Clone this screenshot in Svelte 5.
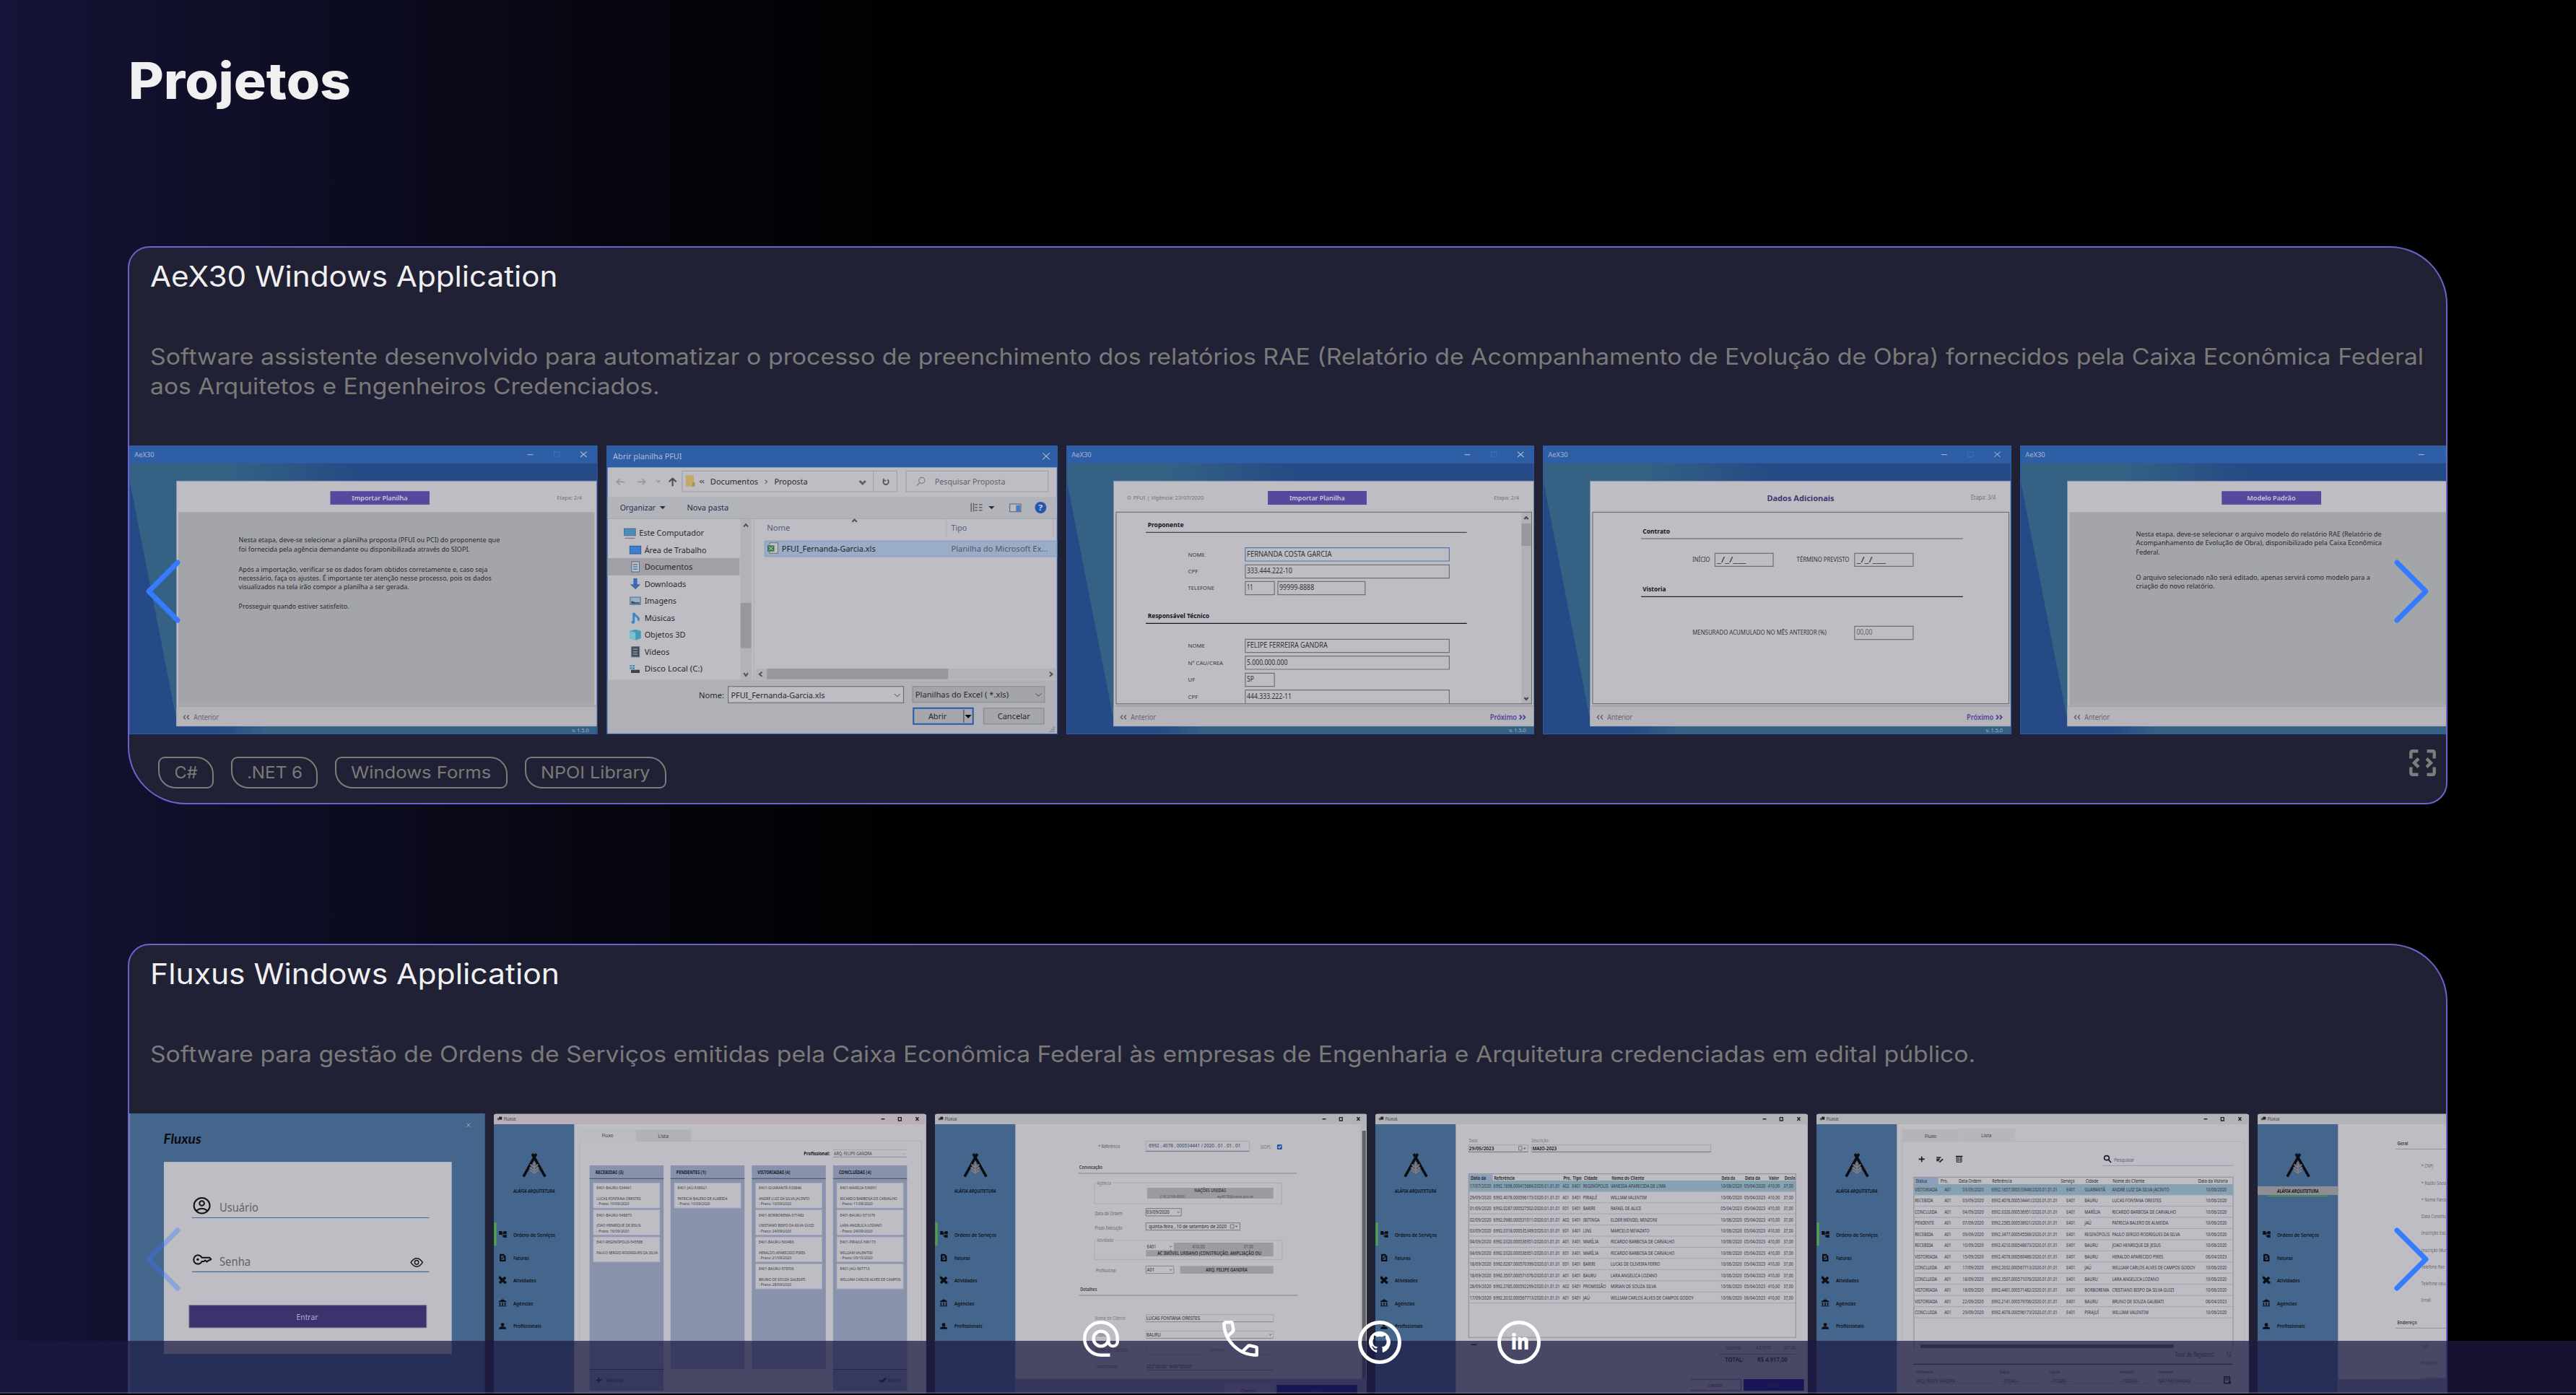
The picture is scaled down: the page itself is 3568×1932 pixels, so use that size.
<script>
  const menu = [
    ['Ordens de Serviços', 540, 145],
    ['Faturas', 636, 54],
    ['Atividades', 729, 79],
    ['Agências', 825, 68],
    ['Profissionais', 920, 96]
  ];

  const tree = [
    ['Área de Trabalho', 485, 207, '#3f7fd0'],
    ['Documentos', 555, 161, '#8f9aa8'],
    ['Downloads', 626, 139, '#3a6bb0'],
    ['Imagens', 697, 107, '#6f8fae'],
    ['Músicas', 767, 102, '#3f86cc'],
    ['Objetos 3D', 837, 137, '#3f9db5'],
    ['Vídeos', 908, 84, '#444a66'],
    ['Disco Local (C:)', 978, 194, '#55606c']
  ];

  const fields = [
    ['NOME', 503, 54, 'FERNANDA COSTA GARCIA', 271, 652],
    ['CPF', 574, 32, '333.444.222-10', 145, 652],
    ['TELEFONE', 643, 84, '11', 20, 93],
    ['NOME', 883, 54, 'FELIPE FERREIRA GANDRA', 258, 652],
    ['Nº CAU/CREA', 953, 112, '5.000.000.000', 130, 652],
    ['UF', 1024, 22, 'SP', 23, 93],
    ['CPF', 1094, 32, '444.333.222-11', 143, 652]
  ];

  const board = [
    { x: 363, name: 'RECEBIDAS (3)', w: 97, cards: [
      ['E401-BAURU-534441', 120, 'LUCAS FONTANA ORESTES', 152, '- Prazo: 10/09/2020', 112],
      ['E401-BAURU-548873', 121, 'JOAO HENRIQUE DE JESUS', 152, '- Prazo: 16/09/2020', 112],
      ['E401-REGINÓPOLIS-545588', 159, 'PAULO SERGIO RODRIGUES DA SILVA', 211, '', 0]
    ] },
    { x: 642, name: 'PENDENTES (1)', w: 102, cards: [
      ['E401-JAÚ-538921', 102, 'PATRICIA BALERO DE ALMEIDA', 172, '- Prazo: 13/09/2020', 112]
    ] },
    { x: 922, name: 'VISTORIADAS (4)', w: 112, cards: [
      ['E401-GUARANTÃ-533846', 147, 'ANDRE LUIZ DA SILVA JACINTO', 175, '- Prazo: 10/09/2020', 112],
      ['E401-BORBOREMA-571482', 156, 'CRISTIANO BISPO DA SILVA GUIZI', 190, '- Prazo: 24/09/2020', 112],
      ['E401-BAURU-560486', 121, 'HERALDO APARECIDO PIRES', 160, '- Prazo: 21/09/2020', 112],
      ['E401-BAURU-579706', 121, 'BRUNO DE SOUZA GALBIATI', 160, '- Prazo: 28/09/2020', 112]
    ] },
    { x: 1202, name: 'CONCLUÍDAS (4)', w: 111, cards: [
      ['E401-MARÍLIA-536951', 127, 'RICARDO BARBOSA DE CARVALHO', 197, '- Prazo: 11/09/2020', 112],
      ['E401-BAURU-571076', 121, 'LARA ANGELICA LOZANO', 144, '- Prazo: 24/09/2020', 112],
      ['E401-PIRAJUÍ-596173', 123, 'WILLIAM VALENTIM', 112, '- Prazo: 05/10/2020', 112],
      ['E401-JAÚ-567713', 102, 'WILLIAM CARLOS ALVES DE CAMPOS', 209, '', 0]
    ] }
  ];

  const invoice = [
    ['17/07/2020', '6992.1896.000415684/2020.01.01.01', 'A02', 'REGINÓPOLIS', 87, 'VANESSA APARECIDA DE LIMA', 190, '10/06/2020', '05/04/2020'],
    ['29/09/2020', '6992.4078.000596173/2020.01.01.01', 'A01', 'PIRAJUÍ', 48, 'WILLIAM VALENTIM', 124, '10/06/2020', '05/04/2023'],
    ['01/09/2020', '6992.0287.000527502/2020.01.01.01', 'E01', 'BARIRI', 42, 'RAFAEL DE ALICE', 105, '05/04/2023', '05/04/2023'],
    ['02/09/2020', '6992.0980.000531011/2020.01.01.01', 'A02', 'IBITINGA', 57, 'ELDER WENDEL MINZONI', 160, '10/06/2020', '05/04/2023'],
    ['03/09/2020', '6992.0318.000535349/2020.01.01.01', 'E01', 'LINS', 28, 'MARCELO MIYAZATO', 133, '10/06/2020', '05/04/2023'],
    ['04/09/2020', '6992.0320.000536951/2020.01.01.01', 'A01', 'MARÍLIA', 53, 'RICARDO BARBOSA DE CARVALHO', 220, '10/06/2020', '05/04/2023'],
    ['04/09/2020', '6992.0320.000536951/2020.01.01.01', 'E01', 'MARÍLIA', 53, 'RICARDO BARBOSA DE CARVALHO', 220, '10/06/2020', '05/04/2023'],
    ['18/09/2020', '6992.0287.000570399/2020.01.01.01', 'E01', 'BARIRI', 42, 'LUCAS DE OLIVEIRA FERRO', 170, '10/06/2020', '05/04/2023'],
    ['18/09/2020', '6992.3507.000571076/2020.01.01.01', 'A01', 'BAURU', 45, 'LARA ANGELICA LOZANO', 160, '10/06/2020', '05/04/2023'],
    ['28/09/2020', '6992.2785.000592299/2020.01.01.01', 'A02', 'PROMISSÃO', 79, 'MIRIAN DE SOUZA SILVA', 157, '10/06/2020', '05/04/2023'],
    ['17/09/2020', '6992.2032.000567713/2020.01.01.01', 'A01', 'JAÚ', 23, 'WILLIAM CARLOS ALVES DE CAMPOS GODOY', 286, '10/06/2020', '06/04/2023']
  ];

  const orders = [
    ['VISTORIADA', 46, '03/09/2020', '6992.1857.000533846/2020.01.01.01', 'GUARANTÃ', 42, 'ANDRE LUIZ DA SILVA JACINTO', 116, '10/06/2020'],
    ['RECEBIDA', 37, '03/09/2020', '6992.4078.000534441/2020.01.01.01', 'BAURU', 27, 'LUCAS FONTANA ORESTES', 100, '10/06/2020'],
    ['CONCLUIDA', 45, '04/09/2020', '6992.0320.000536951/2020.01.01.01', 'MARÍLIA', 32, 'RICARDO BARBOSA DE CARVALHO', 130, '10/06/2020'],
    ['PENDENTE', 39, '07/09/2020', '6992.2585.000538921/2020.01.01.01', 'JAÚ', 14, 'PATRICIA BALERO DE ALMEIDA', 114, '10/06/2020'],
    ['RECEBIDA', 37, '09/09/2020', '6992.3477.000545588/2020.01.01.01', 'REGINÓPOLIS', 51, 'PAULO SERGIO RODRIGUES DA SILVA', 138, '10/06/2020'],
    ['RECEBIDA', 37, '10/09/2020', '6992.4210.000548873/2020.01.01.01', 'BAURU', 27, 'JOAO HENRIQUE DE JESUS', 99, '10/06/2020'],
    ['VISTORIADA', 46, '15/09/2020', '6992.4078.000560486/2020.01.01.01', 'BAURU', 27, 'HERALDO APARECIDO PIRES', 104, '06/04/2023'],
    ['CONCLUIDA', 45, '17/09/2020', '6992.2032.000567713/2020.01.01.01', 'JAÚ', 14, 'WILLIAM CARLOS ALVES DE CAMPOS GODOY', 169, '10/06/2020'],
    ['CONCLUIDA', 45, '18/09/2020', '6992.3507.000571076/2020.01.01.01', 'BAURU', 27, 'LARA ANGELICA LOZANO', 95, '10/06/2020'],
    ['VISTORIADA', 46, '18/09/2020', '6992.4401.000571482/2020.01.01.01', 'BORBOREMA', 50, 'CRISTIANO BISPO DA SILVA GUIZI', 126, '10/06/2020'],
    ['VISTORIADA', 46, '22/09/2020', '6992.2141.000579706/2020.01.01.01', 'BAURU', 27, 'BRUNO DE SOUZA GALBIATI', 105, '06/04/2023'],
    ['CONCLUIDA', 45, '29/09/2020', '6992.4078.000596173/2020.01.01.01', 'PIRAJUÍ', 29, 'WILLIAM VALENTIM', 74, '10/06/2020']
  ];

  const company = [
    ['* CNPJ', 255, 24], ['* Razão Social', 325, 53], ['* Nome Fantasia', 395, 62],
    ['Data Constituição', 465, 66], ['Inscrição Estadual', 534, 70], ['Inscrição Municipal', 604, 72],
    ['Telefone fixo', 674, 47], ['Telefone celular', 743, 60], ['Email', 813, 19],
    ['CEP', 1005, 14], ['Endereço', 1072, 35], ['Complemento', 1140, 52]
  ];
</script>

{#snippet t(x, y, size, width, str, fill = '#29282e', weight = 400)}
  <text {x} y={y + size * 0.34} font-size={size} textLength={width} lengthAdjust="spacingAndGlyphs" {fill} font-weight={weight}>{str}</text>
{/snippet}

{#snippet aexFrame(step, next)}
  <rect width="1497" height="1200" fill="#2d5ea6" />
  <rect x="3" y="74" width="1491" height="1123" fill="url(#aexTop)" />
  <rect x="3" y="120" width="160" height="1077" fill="#356284" />
  <path d="M2 150L151 1140V1197H2Z" fill="#254a85" />
  <rect x="151" y="1160" width="1343" height="37" fill="url(#aexBottom)" />
  {@render t(17, 38, 27, 63, 'AeX30', '#a9b5cf')}
  <path d="M1273 38H1291M1442 26L1462 48M1462 26L1442 48" stroke="#b9bfd0" />
  <rect x="1358" y="27" width="17" height="20" fill="none" stroke="#3d72b8" />
  <rect x="151" y="147" width="1343" height="1019" fill="#bebdc3" />
  <path d="M151 148H1494" stroke="#8190b2" stroke-width="1" />
  <rect x="156" y="1078" width="1338" height="8" fill="#a6a5ab" />
  <rect x="151" y="1086" width="1343" height="80" fill="#b5b4ba" />
  <path d="M180 1120L174 1129L180 1138M191 1120L185 1129L191 1138" fill="none" stroke="#606065" stroke-width="1.5" />
  {@render t(206, 1130, 31, 80, 'Anterior', '#68676c')}
  {#if next}
    {@render t(1354, 1130, 31, 86, 'Próximo', '#51479b', 600)}
    <path d="M1449 1120L1455 1129L1449 1138M1460 1120L1466 1129L1460 1138" fill="none" stroke="#51479b" stroke-width="2" />
  {/if}
  {@render t(1415, 1183, 22, 54, 'v. 1.5.0', '#a3b0c2')}
  {@render t(1367, 218, 24, 80, step, '#727176')}
{/snippet}

{#snippet fluxusFrame(title, active)}
  <path d="M0 46Q0 38 8 38H1482Q1490 38 1490 46V1236H0Z" fill="#bebdc3" />
  <path d="M0 46Q0 38 8 38H1482Q1490 38 1490 46V81H0Z" fill={title} />
  <rect y="81" width="277" height="1155" fill="#44668d" />
  <rect x="12" y="55" width="7" height="9" fill="#55555a" /><rect x="18" y="50" width="10" height="12" fill="#222227" />
  {@render t(34, 60, 21, 42, 'Fluxus', '#39393e')}
  <path d="M1335 59H1347M1454 52L1464 66M1464 52L1454 66" stroke="#242428" stroke-width="1.5" />
  <rect x="1394" y="53" width="10" height="13" fill="none" stroke="#242428" stroke-width="1.3" />
  <path d="M146 204L102 299M132 204L177 299" stroke="#0c0d12" stroke-width="3.6" />
  <path d="M139 240V285M125 250L139 262L153 250M123 262L139 276L155 262M125 274L139 286L153 274" transform="translate(0 -2)" fill="none" stroke="#8d7c7c" stroke-width="1.6" />
  {#if active === 'company'}
    <rect y="339" width="277" height="36" fill="#8e8e92" />
    <rect x="36" y="377" width="206" height="4" fill="#4c9c46" />
  {:else}
    <rect x="1" y="489" width="8" height="96" fill="#4fa04a" />
  {/if}
  <g font-style="italic">{@render t(67, 358, 21, 143, 'ALÁFIA ARQUITETURA', '#0f1118', 600)}</g>
  {#each menu as [label, y, w]}
    {@render t(67, y, 23, w, label, '#101218', 600)}
  {/each}
  <path d="M18 525H28V540H18ZM33 526H44V538H33ZM33 541H44V552H33ZM28 531H33V534H28ZM29 534H31V548H29ZM29 545H33V548H29Z" fill="#0d0e13" />
  <path d="M20 620H34L41 629V651H20Z" fill="#0d0e13" />
  <path d="M34 629H27V636H34V643H26" fill="none" stroke="#44668d" stroke-width="1.2" />
  <path d="M20 718L41 741M40 717L20 741" stroke="#0d0e13" stroke-width="3.6" />
  <path d="M17 717H24M37 739H43" stroke="#0d0e13" stroke-width="2.5" />
  <path d="M17 817L30 808L43 817V820H17ZM19 823H23V833H19ZM28 823H32V833H28ZM37 823H41V833H37ZM17 835H43V838H17Z" fill="#0d0e13" />
  <path d="M24 914A6 7 0 1 1 36 914A6 7 0 1 1 24 914ZM18 932V928Q19 922 30 922Q41 922 42 928V932Z" fill="#0d0e13" />
{/snippet}

{#snippet arrow(side, faded)}
  <svg class="arrow {side}" class:faded viewBox="0 0 48 88" aria-hidden="true">
    <path d={side === 'left' ? 'M44 4L4 44L44 84' : 'M4 4L44 44L4 84'} />
  </svg>
{/snippet}

<svelte:head><title>Projetos</title></svelte:head>

<svg class="defs" aria-hidden="true">
  <defs>
    <linearGradient id="aexTop" gradientUnits="userSpaceOnUse" x1="300" y1="0" x2="740" y2="0">
      <stop offset="0" stop-color="#356284" /><stop offset="1" stop-color="#254a85" />
    </linearGradient>
    <linearGradient id="aexBottom" gradientUnits="userSpaceOnUse" x1="290" y1="0" x2="440" y2="0">
      <stop offset="0" stop-color="#254a85" /><stop offset="1" stop-color="#356284" />
    </linearGradient>
  </defs>
</svg>

<div class="page">
  <h1>Projetos</h1>

  <section class="card">
    <h2>AeX30 Windows Application</h2>
    <p>
      <span class="d1">Software assistente desenvolvido para automatizar o processo de preenchimento dos relatórios RAE (Relatório de Acompanhamento de Evolução de Obra) fornecidos pela Caixa Econômica Federal</span>
      <span class="d2">aos Arquitetos e Engenheiros Credenciados.</span>
    </p>
    <div class="gallery">
      <div class="strip">
        <svg class="slide w649" viewBox="0 0 1497 1200" preserveAspectRatio="none">
          {@render aexFrame('Etapa: 2/4', false)}
          <g transform="scale(.9855 1.0144) translate(-21 -50)">
            <rect x="180" y="323" width="1350" height="788" fill="#a4a5a9" />
            <rect x="673" y="237" width="322" height="55" fill="#54499c" />
            {@render t(743, 265, 28, 181, 'Importar Planilha', '#c9c7da', 600)}
            {@render t(376, 438, 28, 847, 'Nesta etapa, deve-se selecionar a planilha proposta (PFUI ou PCI) do proponente que')}
            {@render t(376, 474, 28, 750, 'foi fornecida pela agência demandante ou disponibilizada através do SIOPI.')}
            {@render t(376, 558, 28, 807, 'Após a importação, verificar se os dados foram obtidos corretamente e, caso seja')}
            {@render t(376, 594, 28, 820, 'necessário, faça os ajustes. É importante ter atenção nesse processo, pois os dados')}
            {@render t(376, 630, 28, 553, 'visualizados na tela irão compor a planilha a ser gerada.')}
            {@render t(376, 709, 28, 358, 'Prosseguir quando estiver satisfeito.')}
          </g>
        </svg>

        <svg class="slide w625" viewBox="23 51 1508 1200" preserveAspectRatio="none">
          <rect x="23" y="51" width="1508" height="1200" fill="#2d5ea6" />
          <rect x="27" y="142" width="1501" height="1105" fill="#bebdc3" />
          {@render t(45, 98, 33, 230, 'Abrir planilha PFUI', '#b3bcd0')}
          <path d="M1481 82L1504 109M1504 82L1481 109" stroke="#b9c0d0" />
          <path d="M83 202H57M68 190L57 202L68 214M128 202H153M142 190L153 202L142 214M190 196L196 203L202 196" fill="none" stroke="#97969d" stroke-width="1.6" />
          <path d="M244 220V188M232 202L244 188L256 202" fill="none" stroke="#4a4a50" stroke-width="2" />
          <rect x="276" y="157" width="718" height="86" fill="none" stroke="#9c9ba1" />
          <path d="M915 157V243" stroke="#9c9ba1" />
          <rect x="1024" y="157" width="475" height="86" fill="none" stroke="#9c9ba1" />
          <path d="M288 174H315V221H288Z" fill="#c3a968" /><path d="M310 204H318V221H310Z" fill="#a8904e" />
          {@render t(332, 198, 34, 20, '«', '#55555b')}
          {@render t(370, 201, 34, 160, 'Documentos')}
          <path d="M553 194L560 202L553 210" fill="none" stroke="#55555b" />
          {@render t(584, 201, 34, 111, 'Proposta')}
          <path d="M869 198L879 210L889 198" fill="none" stroke="#606066" stroke-width="3" />
          <path d="M950 195A9 11 0 1 0 962 193M949 188V197H957" fill="none" stroke="#55555b" stroke-width="1.8" />
          <ellipse cx="1077" cy="196" rx="10" ry="12" fill="none" stroke="#6b7180" /><path d="M1070 206L1060 218" stroke="#6b7180" />
          {@render t(1120, 201, 33, 236, 'Pesquisar Proposta', '#626168')}
          <rect x="27" y="265" width="1501" height="90" fill="#b3b4b9" />
          <path d="M27 355H1528" stroke="#a3a4aa" stroke-width="1" />
          {@render t(68, 309, 33, 119, 'Organizar', '#22304f')}
          <path d="M201 303H220L211 316ZM1300 303H1320L1310 316Z" fill="#22304f" />
          {@render t(292, 309, 33, 139, 'Nova pasta', '#22304f')}
          <path d="M1242 290V326M1250 290V326M1254 296H1263M1254 308H1263M1254 320H1263M1268 296H1279M1268 308H1279M1268 320H1279" stroke="#62646b" stroke-width="1.5" />
          <rect x="1371" y="294" width="37" height="32" fill="#b9bac2" stroke="#5b6070" /><rect x="1392" y="299" width="14" height="25" fill="#4480bd" />
          <ellipse cx="1474" cy="309" rx="19" ry="24" fill="#2856a8" />
          {@render t(1466, 309, 34, 15, '?', '#c8cce0', 700)}
          <rect x="27" y="519" width="441" height="72" fill="#a1a0a6" />
          <rect x="471" y="357" width="37" height="668" fill="#b2b3b8" />
          <rect x="471" y="705" width="36" height="188" fill="#97989d" />
          <path d="M482 389L489 378L496 389M482 996L489 1008L496 996M844 368L852 359L860 368" fill="none" stroke="#505056" stroke-width="2" />
          <path d="M516 357V1024M1159 357V430M1516 357V430" stroke="#acadb4" stroke-width="1" />
          <rect x="82" y="396" width="38" height="29" fill="#4a8cba" stroke="#567086" /><path d="M84 436H118" stroke="#5d6a78" />
          {@render t(132, 415, 34, 217, 'Este Computador')}
          {#each tree as [name, y, w, colour], i}
            {#if i === 2}
              <path d="M113 {y - 23}H126V{y + 2}H137L120 {y + 23}L102 {y + 2}H113Z" fill={colour} />
            {:else if i === 4}
              <path d="M114 {y + 16}V{y - 20}Q118 {y - 9} 126 {y - 4}Q133 {y + 3} 129 {y + 12}" fill="none" stroke={colour} stroke-width="3" />
              <ellipse cx="112" cy={y + 18} rx="6" ry="6" fill={colour} />
            {:else if i === 5}
              <path d="M101 {y - 16}L120 {y - 22}L138 {y - 16}V{y + 15}L120 {y + 23}L101 {y + 15}Z" fill={colour} /><path d="M120 {y - 8}V{y + 23}L101 {y + 15}V{y - 16}Z" fill="#7ec0cf" />
            {:else if i === 1 || i === 6}
              <rect x="107" y={y - 21} width="26" height="42" fill={i === 1 ? '#bcc2cc' : '#444a66'} stroke="#626874" />
              <path d="M112 {y - 10}H127M112 {y}H127M112 {y + 10}H127" stroke={i === 1 ? '#4a7cae' : '#8a93a0'} stroke-width="1.5" />
            {:else if i === 3}
              <rect x="102" y={y - 16} width="35" height="31" fill="#8fb0cc" stroke="#5f6a78" /><path d="M106 {y + 12}V{y}L120 {y + 6}H134V{y + 12}Z" fill="#34506c" />
            {:else if i === 7}
              <path d="M105 {y + 5}H134V{y + 18}H105Z" fill="#3d4148" /><path d="M101 {y - 15}H108V{y - 8}H101ZM110 {y - 15}H117V{y - 8}H110ZM101 {y - 5}H108V{y + 2}H101ZM110 {y - 5}H117V{y + 2}H110Z" fill="#3f8fc4" />
            {:else}
              <rect x="101" y={y - 16} width="37" height="32" fill={colour} stroke="#2c5b9c" />
            {/if}
            {@render t(150, y, 34, w, name)}
          {/each}
          {@render t(559, 395, 33, 78, 'Nome', '#545f78')}
          {@render t(1175, 395, 33, 53, 'Tipo', '#545f78')}
          <rect x="552" y="448" width="976" height="64" fill="#9badc6" stroke="#7b9fc6" />
          <rect x="568" y="455" width="28" height="44" fill="#bcc2c4" stroke="#687870" /><rect x="561" y="466" width="23" height="25" fill="#3e7050" /><path d="M566 471L579 486M579 471L566 486" stroke="#c5d0cc" />
          {@render t(609, 480, 33, 313, 'PFUI_Fernanda-Garcia.xls', '#1d1f28')}
          {@render t(1175, 480, 33, 323, 'Planilha do Microsoft Ex...', '#50596b')}
          <rect x="522" y="978" width="1006" height="44" fill="#b2b3b8" />
          <path d="M543 992L534 1001L543 1010M1504 992L1513 1001L1504 1010" fill="none" stroke="#505056" stroke-width="2" />
          <rect x="559" y="978" width="606" height="44" fill="#97989d" />
          <rect x="27" y="1025" width="1501" height="222" fill="#b0b1b6" />
          {@render t(332, 1088, 34, 84, 'Nome:')}
          <rect x="430" y="1052" width="586" height="68" fill="#bebdc3" stroke="#65656b" />
          {@render t(439, 1090, 33, 314, 'PFUI_Fernanda-Garcia.xls')}
          <rect x="1046" y="1052" width="441" height="66" fill="#a4a5aa" stroke="#88898e" />
          {@render t(1055, 1087, 34, 312, 'Planilhas do Excel  ( *.xls)')}
          <path d="M985 1083L995 1094L1005 1083M1457 1081L1467 1092L1477 1081" fill="none" stroke="#606066" />
          <rect x="1049" y="1142" width="199" height="66" fill="#a6a7ac" stroke="#2859ad" stroke-width="2" />
          {@render t(1099, 1175, 34, 61, 'Abrir')}
          <path d="M1217 1148V1202" stroke="#606066" stroke-width="1.5" /><path d="M1221 1170H1243L1232 1185Z" fill="#0b0b0f" />
          <rect x="1284" y="1142" width="201" height="66" fill="#a6a7ac" stroke="#828388" />
          {@render t(1330, 1175, 34, 109, 'Cancelar')}
          <path d="M1515 1219H1521V1226H1515ZM1509 1228H1521V1234H1509ZM1503 1237H1521V1242H1503Z" fill="#919298" />
        </svg>

        <svg class="slide w649" viewBox="0 0 1497 1200" preserveAspectRatio="none">
          {@render aexFrame('Etapa: 2/4', true)}
          <g transform="translate(-38 -51)">
            {@render t(233, 269, 24, 244, '⊙ PFUI | Vigência: 23/07/2020', '#727176')}
            <rect x="682" y="240" width="316" height="57" fill="#54499c" />
            {@render t(751, 269, 29, 177, 'Importar Planilha', '#c9c7da', 600)}
            <rect x="197" y="328" width="1328" height="796" fill="#bebdc3" stroke="#626268" />
            <rect x="1493" y="330" width="30" height="791" fill="#b0b1b6" /><rect x="1493" y="375" width="30" height="93" fill="#97989d" />
            <path d="M1502 357L1508 348L1514 357M1502 1098L1508 1107L1514 1098" fill="none" stroke="#45454b" stroke-width="2" />
            {@render t(298, 380, 26, 115, 'Proponente', '#151519', 700)}
            {@render t(298, 759, 26, 197, 'Responsável Técnico', '#151519', 700)}
            <path d="M292 412H1318" stroke="#46464c" stroke-width="1.3" /><path d="M292 790H1318" stroke="#151519" stroke-width="1.3" />
            {#each fields as [label, y, lw, value, vw, bw], i}
              {@render t(427, y + 1, 24, lw, label, '#38373d')}
              {#if i < 6}
                <rect x="610" y={y - 27} width={bw} height="55" fill="none" stroke={i === 0 ? '#5076ae' : '#707077'} stroke-width="1.2" />
              {:else}
                <path d="M610 1122V1067H1262V1122" fill="none" stroke="#707077" stroke-width="1.2" />
              {/if}
              {@render t(615, y - 1, 30, vw, value, '#34333a')}
            {/each}
            <rect x="714" y="616" width="279" height="55" fill="none" stroke="#707077" stroke-width="1.2" />
            {@render t(719, 642, 30, 111, '99999-8888', '#34333a')}
          </g>
        </svg>

        <svg class="slide w650" viewBox="0 0 1497 1200" preserveAspectRatio="none">
          {@render aexFrame('Etapa: 3/4', true)}
          <g transform="translate(-38 -51)">
            {@render t(754, 271, 33, 215, 'Dados Adicionais', '#433874', 700)}
            <rect x="197" y="328" width="1330" height="796" fill="none" stroke="#626268" />
            {@render t(357, 407, 26, 87, 'Contrato', '#151519', 700)}
            {@render t(357, 647, 26, 74, 'Vistoria', '#151519', 700)}
            <path d="M352 438H1380" stroke="#606066" /><path d="M352 679H1380" stroke="#222227" stroke-width="1.3" />
            {@render t(516, 526, 24, 56, 'INÍCIO', '#38373d')}
            {@render t(849, 526, 24, 168, 'TÉRMINO PREVISTO', '#38373d')}
            {@render t(516, 830, 24, 428, 'MENSURADO ACUMULADO NO MÊS ANTERIOR (%)', '#38373d')}
            <rect x="588" y="499" width="186" height="54" fill="none" stroke="#707077" stroke-width="1.2" />
            <rect x="1034" y="499" width="187" height="54" fill="none" stroke="#707077" stroke-width="1.2" />
            <rect x="1034" y="802" width="187" height="55" fill="none" stroke="#707077" stroke-width="1.2" />
            {@render t(594, 525, 31, 93, '_/_/___')}
            {@render t(1040, 525, 31, 93, '_/_/___')}
            {@render t(1040, 828, 30, 51, '00,00', '#67666c')}
          </g>
        </svg>

        <svg class="slide w650" viewBox="0 0 1497 1200" preserveAspectRatio="none">
          {@render aexFrame('Etapa: 4/4', false)}
          <g transform="scale(.9403 1.0144) translate(-43 -50)">
            <rect x="211" y="323" width="1413" height="788" fill="#a4a5a9" />
            <rect x="728" y="237" width="338" height="55" fill="#54499c" />
            {@render t(814, 265, 28, 165, 'Modelo Padrão', '#c9c7da', 600)}
            {@render t(437, 414, 28, 834, 'Nesta etapa, deve-se selecionar o arquivo modelo do relatório RAE (Relatório de')}
            {@render t(437, 450, 28, 835, 'Acompanhamento de Evolução de Obra), disponibilizado pela Caixa Econômica')}
            {@render t(437, 486, 28, 81, 'Federal.')}
            {@render t(437, 591, 28, 795, 'O arquivo selecionado não será editado, apenas servirá como modelo para a')}
            {@render t(437, 627, 28, 267, 'criação do novo relatório.')}
          </g>
        </svg>
      </div>
      {@render arrow('left', false)}
      {@render arrow('right', false)}
    </div>
    <div class="foot">
      <ul class="tags">
        <li class="t1"><span>C#</span></li>
        <li class="t2"><span>.NET 6</span></li>
        <li class="t3"><span>Windows Forms</span></li>
        <li class="t4"><span>NPOI Library</span></li>
      </ul>
      <svg class="code" viewBox="0 0 37 37" aria-hidden="true">
        <path d="M2.3 12.5V4.8Q2.3 2.3 4.8 2.3H12.5M24.5 2.3H32.2Q34.7 2.3 34.7 4.8V12.5M34.7 24.5V32.2Q34.7 34.7 32.2 34.7H24.5M12.5 34.7H4.8Q2.3 34.7 2.3 32.2V24.5M13 12.7L7 18.5L13 24.3M24 12.7L30 18.5L24 24.3" />
      </svg>
    </div>
  </section>

  <section class="card fluxus">
    <h2>Fluxus Windows Application</h2>
    <p><span class="d3">Software para gestão de Ordens de Serviços emitidas pela Caixa Econômica Federal às empresas de Engenharia e Arquitetura credenciadas em edital público.</span></p>
    <div class="gallery">
      <div class="strip">
        <svg class="slide w493" viewBox="27 615 1479 977" preserveAspectRatio="none">
          <rect x="27" y="615" width="1479" height="977" fill="#44668d" />
          <path d="M28 615V1592" stroke="#8e92a6" />
          <path d="M1430 648L1445 661M1445 648L1430 661" stroke="#9aa6b8" stroke-width="1" />
          <g font-style="italic" font-family="Lato">{@render t(170, 702, 46, 156, 'Fluxus', '#0a0b10', 700)}</g>
          <rect x="171" y="779" width="1197" height="650" fill="#bebdc3" />
          <ellipse cx="329" cy="927" rx="33" ry="26" fill="none" stroke="#101116" stroke-width="2" />
          <ellipse cx="329" cy="919" rx="10" ry="8" fill="none" stroke="#101116" stroke-width="2" />
          <path d="M306 944Q329 930 352 944" fill="none" stroke="#101116" stroke-width="2" />
          {@render t(402, 935, 39, 162, 'Usuário', '#626167')}
          {@render t(402, 1118, 39, 130, 'Senha', '#626167')}
          <path d="M288 968H1274M288 1151H1274" stroke="#46689a" stroke-width="1.2" />
          <path d="M329 1103A18 15 0 1 0 329 1116H337L343 1112L350 1117L357 1112H361L367 1108L361 1103Z" fill="none" stroke="#101116" stroke-width="2" />
          <ellipse cx="312" cy="1109" rx="5" ry="4" fill="#101116" />
          <path d="M1198 1119Q1222 1092 1247 1119Q1222 1148 1198 1119Z" fill="none" stroke="#101116" stroke-width="1.4" />
          <ellipse cx="1222" cy="1119" rx="8" ry="7" fill="none" stroke="#101116" stroke-width="1.4" />
          <rect x="276" y="1264" width="987" height="76" fill="#3c326d" stroke="#77728f" stroke-width="1" />
          {@render t(722, 1304, 27, 90, 'Entrar', '#b2afc6')}
        </svg>

        <svg class="slide w599" viewBox="0 36 1490 1200" preserveAspectRatio="none">
          {@render fluxusFrame('#b9b0b7', 'orders')}
          <g transform="translate(-33 0)">
            <rect x="329" y="151" width="1178" height="1085" fill="none" stroke="#b0b1b7" />
            <rect x="327" y="101" width="196" height="52" fill="#bbbcc0" /><rect x="523" y="104" width="189" height="46" fill="#b1b2b7" />
            {@render t(405, 128, 23, 40, 'Fluxo', '#3d3d43')}
            {@render t(599, 130, 23, 36, 'Lista', '#3d3d43')}
            {@render t(1101, 204, 21, 90, 'Profissional:', '#17171c', 700)}
            {@render t(1205, 204, 20, 131, 'ARQ. FELIPE GANDRA', '#3d3d43')}
            <path d="M1202 187H1455M1441 201L1446 206L1451 201" fill="none" stroke="#a0a0a7" stroke-width="1" /><path d="M1202 217H1455" stroke="#8b8b92" stroke-width="1" />
            {#each board as col, ci}
              <rect x={col.x} y="252" width="255" height="846" fill="#8892ad" />
              <path d="M{col.x} 307H{col.x + 255}" stroke="#50586e" stroke-width="1.2" />
              {@render t(col.x + 20, 281, 20, col.w, col.name, '#1b1e2a', 700)}
              {#each col.cards as [code, cw, client, nw, due, dw], i}
                <rect x={col.x + 13} y={325 + i * 112} width="229" height="104" fill="#bebdc3" stroke="#a3abbe" stroke-width="1" />
                {@render t(col.x + 24, 346 + i * 112, 18, cw, code, '#3a3c48')}
                {@render t(col.x + 24, 390 + i * 112, 18, nw, client, '#3a3c48')}
                {#if due}{@render t(col.x + 24, 412 + i * 112, 18, dw, due, '#3a3c48')}{/if}
              {/each}
              {#if ci === 0 || ci === 3}
                <rect x={col.x} y="1098" width="255" height="90" fill="#7f88a8" /><path d="M{col.x} 1099H{col.x + 255}" stroke="#333a52" />
              {/if}
            {/each}
            <path d="M386 1144H404M395 1133V1155" stroke="#15161d" stroke-width="1.8" />
            {@render t(421, 1145, 22, 59, 'Adicionar', '#25262e')}
            <path d="M1361 1144L1368 1152L1381 1136M1368 1144L1373 1152L1386 1136" fill="none" stroke="#15161d" stroke-width="1.3" />
            {@render t(1392, 1145, 22, 43, 'Faturar', '#25262e')}
          </g>
        </svg>

        <svg class="slide w599" viewBox="0 36 1490 1200" preserveAspectRatio="none">
          {@render fluxusFrame('#b2b3b7', 'orders')}
          <g transform="translate(-36 0)">
            <rect x="1502" y="81" width="24" height="1058" fill="#b5b6bb" /><rect x="1508" y="108" width="13" height="1031" fill="#626268" />
            {@render t(599, 172, 21, 74, '* Referência', '#605f66')}
            <path d="M763 193V151H1120V193" fill="none" stroke="#a6a6ad" stroke-width="1" /><path d="M763 193H1120" stroke="#77777e" stroke-width="1.2" />
            {@render t(773, 170, 22, 316, '6992 . 4078 . 000534441 / 2020 . 01 . 01 . 01', '#2e3f62')}
            {@render t(1158, 175, 20, 37, 'SIOPI:', '#77777e')}
            <rect x="1215" y="165" width="17" height="21" rx="3" fill="#2a56a8" /><path d="M1219 175L1222 179L1228 171" fill="none" stroke="#c3c8dc" stroke-width="1.2" />
            {@render t(533, 260, 20, 80, 'Convocação', '#3c3c42', 600)}
            {@render t(537, 766, 20, 57, 'Detalhes', '#3c3c42', 600)}
            <path d="M530 285H1283M533 792H1286" stroke="#a09fa6" stroke-width="2" />
            <path d="M590 325H586V411H1231V325H650M590 563H586V643H1233V563H658" fill="none" stroke="#abaab1" stroke-width="1" />
            {@render t(594, 327, 20, 49, 'Agência', '#77777e')}
            <rect x="767" y="345" width="435" height="45" fill="#9c9ba1" />
            {@render t(930, 357, 19, 109, 'NAÇÕES UNIDAS', '#3c3c42', 600)}
            {@render t(811, 380, 18, 87, '(14) 2109-9800', '#56555c')}
            {@render t(1008, 380, 18, 127, 'ag4078@caixa.gov.br', '#56555c')}
            {@render t(587, 451, 21, 95, 'Data da Ordem', '#67666d')}
            <rect x="763" y="431" width="122" height="31" fill="none" stroke="#77777e" stroke-width="1" />
            {@render t(765, 447, 20, 79, '03/09/2020')}
            {@render t(587, 512, 21, 95, 'Prazo Execução', '#67666d')}
            <rect x="763" y="491" width="324" height="30" fill="none" stroke="#77777e" stroke-width="1" />
            {@render t(773, 507, 21, 268, 'quinta-feira , 10 de setembro de 2020')}
            <rect x="1054" y="498" width="12" height="15" fill="none" stroke="#77777e" stroke-width="1" /><path d="M1070 503H1079L1075 509Z" fill="#4a5068" />
            {@render t(594, 563, 20, 58, 'Atividade', '#77777e')}
            <path d="M859 573H1202V630H763V604H859Z" fill="#9c9ba1" />
            {@render t(767, 589, 20, 31, 'E401')}
            {@render t(923, 590, 20, 43, '410.00', '#4c4b52')}
            {@render t(1099, 590, 20, 34, '37.00', '#4c4b52')}
            {@render t(802, 617, 20, 359, 'AC IMÓVEL URBANO (CONSTRUÇÃO, AMPLIAÇÃO OU', '#333238', 600)}
            {@render t(590, 690, 21, 70, 'Profissional', '#67666d')}
            <rect x="763" y="670" width="96" height="31" fill="none" stroke="#88888e" stroke-width="1" />
            {@render t(767, 686, 20, 25, 'A01')}
            <rect x="881" y="670" width="321" height="32" fill="#9c9ba1" />
            {@render t(969, 686, 20, 144, 'ARQ. FELIPE GANDRA', '#333238', 600)}
            <path d="M871 445L875 449L879 445M845 587L849 591L853 587M845 684L849 688L853 684M1188 953L1192 957L1196 953" fill="none" stroke="#606066" stroke-width="1" />
            {@render t(587, 888, 21, 105, 'Nome do Cliente', '#77777e')}
            <path d="M763 902H1202M763 970H1202M763 1102H1202" stroke="#84848a" stroke-width="1" />
            <path d="M763 902V872H1202V902M763 969V940H1202V969M765 1007V1036H960V1007M1061 1036H1202" fill="none" stroke="#a3a3aa" stroke-width="1" />
            {@render t(765, 888, 21, 184, 'LUCAS FONTANA ORESTES')}
            {@render t(587, 955, 21, 45, 'Cidade', '#67666d')}
            {@render t(765, 955, 21, 49, 'BAURU')}
            {@render t(587, 1020, 21, 113, 'Nome do Contato', '#67666d')}
            {@render t(982, 1020, 21, 51, 'Telefone', '#77777e')}
            {@render t(587, 1089, 21, 78, 'Coordenada', '#67666d')}
            {@render t(765, 1089, 21, 158, `S22°00'00" W48°00'00"`, '#333238')}
            <rect x="313" y="1139" width="1213" height="97" fill="#7d86a2" />
            <rect x="1031" y="1164" width="175" height="72" fill="#958fa8" /><rect x="1214" y="1164" width="277" height="72" fill="#0c0b82" />
            {@render t(1090, 1189, 21, 54, 'Cancelar', '#2d2c38')}
            {@render t(1331, 1189, 21, 40, 'Alterar', '#54509a')}
          </g>
        </svg>

        <svg class="slide w599" viewBox="0 36 1490 1200" preserveAspectRatio="none">
          {@render fluxusFrame('#b2b3b7', 'orders')}
          <g transform="translate(-38 0)">
            {@render t(360, 149, 20, 31, 'Data:', '#77777e')}
            {@render t(576, 149, 20, 61, 'Descrição:', '#77777e')}
            <rect x="359" y="167" width="205" height="29" fill="none" stroke="#a0a0a7" stroke-width="1" /><rect x="576" y="167" width="618" height="29" fill="none" stroke="#a0a0a7" stroke-width="1" />
            <path d="M359 196H564M576 196H1194" stroke="#77777e" stroke-width="1" />
            {@render t(361, 182, 21, 86, '29/05/2023', '#17171c', 600)}
            <rect x="532" y="173" width="11" height="16" fill="none" stroke="#77777e" stroke-width="1" /><path d="M548 179H557L552 185Z" fill="#45506c" />
            {@render t(579, 182, 21, 84, 'MAIO-2023', '#17171c', 600)}
            <rect x="360" y="287" width="1127" height="680" fill="none" stroke="#97979e" stroke-width="1.4" />
            <rect x="361" y="289" width="81" height="26" fill="#8fa0bf" />
            <rect x="361" y="315" width="1125" height="45" fill="#86a2b2" />
            {@render t(367, 304, 20, 52, 'Data da', '#1d1d22', 600)}
            {@render t(447, 304, 20, 71, 'Referência', '#1d1d22', 600)}
            {@render t(686, 304, 20, 26, 'Pro.', '#1d1d22', 600)}
            {@render t(718, 304, 20, 31, 'Tipo', '#1d1d22', 600)}
            {@render t(757, 304, 20, 47, 'Cidade', '#1d1d22', 600)}
            {@render t(852, 304, 20, 113, 'Nome do Cliente', '#1d1d22', 600)}
            {@render t(1231, 304, 20, 46, 'Data da', '#1d1d22', 600)}
            {@render t(1312, 304, 20, 52, 'Data da', '#1d1d22', 600)}
            {@render t(1394, 304, 20, 35, 'Valor', '#1d1d22', 600)}
            {@render t(1448, 304, 20, 37, 'Deslo', '#1d1d22', 600)}
            {#each invoice as [d, ref, pro, city, cw, name, nw, a, b], i}
              {@render t(363, 339 + i * 46.35, 19.5, 74, d, '#32333b')}
              {@render t(445, 339 + i * 46.35, 19.5, 229, ref, '#32333b')}
              {@render t(683, 339 + i * 46.35, 19.5, 23, pro, '#32333b')}
              {@render t(716, 339 + i * 46.35, 19.5, 30, 'E401', '#32333b')}
              {@render t(754, 339 + i * 46.35, 19.5, cw, city, '#32333b')}
              {@render t(849, 339 + i * 46.35, 19.5, nw, name, '#32333b')}
              {@render t(1228, 339 + i * 46.35, 19.5, 73, a, '#32333b')}
              {@render t(1309, 339 + i * 46.35, 19.5, 73, b, '#32333b')}
              {@render t(1391, 339 + i * 46.35, 19.5, 41, '410,00', '#32333b')}
              {@render t(1444, 339 + i * 46.35, 19.5, 34, '37,00', '#32333b')}
              <path d="M361 {360.5 + i * 46.35}H1486" stroke="#9fa4b1" stroke-width="1" />
            {/each}
            <path d="M368 997H387" stroke="#17171c" stroke-width="1.4" />
            {@render t(1246, 1009, 20, 53, 'Subtotal:', '#56555c')}
            {@render t(1350, 1009, 20, 51, '4.510,00', '#56555c')}
            {@render t(1445, 1009, 20, 41, '407,00', '#56555c')}
            <path d="M1223 1036H1486" stroke="#808087" stroke-width="1" />
            {@render t(1243, 1061, 25, 64, 'TOTAL:', '#17171c', 600)}
            {@render t(1354, 1061, 25, 104, 'R$ 4.917,00', '#17171c', 600)}
            <path d="M1125 1187H1298V1141H1125" fill="none" stroke="#606066" stroke-width="1" />
            {@render t(1184, 1165, 22, 53, 'Cancelar', '#3d3d44')}
            <rect x="1307" y="1140" width="208" height="48" fill="#0c0b82" />
            {@render t(1388, 1165, 22, 43, 'Faturar', '#54509a')}
          </g>
        </svg>

        <svg class="slide w599" viewBox="0 36 1490 1200" preserveAspectRatio="none">
          {@render fluxusFrame('#b2b3b7', 'orders')}
          <g transform="scale(1.695 1) translate(-23 0)">
            <rect x="197" y="152" width="696" height="1084" fill="none" stroke="#b0b1b7" />
            <rect x="197" y="103" width="114" height="48" fill="#b3b4b9" /><rect x="311" y="99" width="116" height="53" fill="#b6b7bb" />
            {@render t(243, 129, 24, 24, 'Fluxo', '#3d3d43')}
            {@render t(358, 127, 24, 21, 'Lista', '#3d3d43')}
            <path d="M231 226H243M237 215V238M267 219H276M267 226H274M267 232H272M273 239L280 226" stroke="#1b1b20" stroke-width="1.7" />
            <rect x="308" y="216" width="10" height="22" fill="none" stroke="#1b1b20" /><path d="M306 214H320M311 220V234M315 220V234" stroke="#1b1b20" stroke-width="1.2" />
            <ellipse cx="613" cy="221" rx="5" ry="9" fill="none" stroke="#1b1b20" stroke-width="1.6" /><path d="M617 229L622 240" stroke="#1b1b20" stroke-width="1.6" />
            {@render t(628, 230, 23, 41, 'Pesquisar', '#606066')}
            <path d="M605 253H870" stroke="#98a0b6" stroke-width="1.2" />
            <path d="M221 1015V301H870V1015" fill="none" stroke="#97979e" stroke-width="1.4" />
            <rect x="222" y="303" width="49" height="27" fill="#8fa0bf" /><rect x="222" y="330" width="647" height="45" fill="#86a2b2" />
            {@render t(225, 317, 21, 23, 'Status')}
            {@render t(275, 317, 21, 15, 'Pro.')}
            {@render t(312, 317, 21, 46, 'Data Ordem')}
            {@render t(380, 317, 21, 40, 'Referência')}
            {@render t(520, 317, 21, 28, 'Serviço')}
            {@render t(570, 317, 21, 26, 'Cidade')}
            {@render t(625, 317, 21, 65, 'Nome do Cliente')}
            {@render t(799, 317, 21, 60, 'Data da Vistoria')}
            {#each orders as [status, sw, d, ref, city, cw, name, nw, visit], i}
              {@render t(223, 353 + i * 46.4, 20, sw, status, '#32333b')}
              {@render t(283, 353 + i * 46.4, 20, 14, 'A01', '#32333b')}
              {@render t(320, 353 + i * 46.4, 20, 43, d, '#32333b')}
              {@render t(379, 353 + i * 46.4, 20, 134, ref, '#32333b')}
              {@render t(531, 353 + i * 46.4, 20, 18, 'E401', '#32333b')}
              {@render t(568, 353 + i * 46.4, 20, cw, city, '#32333b')}
              {@render t(624, 353 + i * 46.4, 20, nw, name, '#32333b')}
              {@render t(814, 353 + i * 46.4, 20, 43, visit, '#32333b')}
              <path d="M222 {375 + i * 46.4}H869" stroke="#9fa4b1" stroke-width="1" />
            {/each}
            <rect x="234" y="996" width="515" height="15" fill="#606066" />
            {@render t(752, 1039, 25, 80, 'Total de Registros:', '#45454b')}
            {@render t(856, 1039, 25, 10, '12', '#45454b')}
            <path d="M220 1078H869" stroke="#45454b" stroke-width="1.2" />
            {@render t(225, 1109, 17, 36, 'Profissional', '#45454b')}
            {@render t(395, 1109, 17, 20, 'Status', '#45454b')}
            {@render t(496, 1109, 17, 22, 'Cidade', '#45454b')}
            {@render t(639, 1109, 17, 29, 'Atividade', '#45454b')}
            {@render t(718, 1109, 17, 30, 'Faturadas', '#45454b')}
            {@render t(226, 1148, 20, 79, 'ARQ. FELIPE GANDRA', '#38383e')}
            {@render t(398, 1148, 20, 38, '--TODAS--', '#38383e')}
            {@render t(498, 1148, 20, 38, '--TODAS--', '#38383e')}
            {@render t(641, 1148, 20, 38, '--TODAS--', '#38383e')}
            {@render t(718, 1148, 20, 65, 'NÃO FATURADAS', '#38383e')}
            <path d="M225 1160H384M395 1160H484M496 1160H628M639 1160H706M717 1160H828" stroke="#a0a0a7" stroke-width="1" />
            <rect x="852" y="1130" width="11" height="27" fill="none" stroke="#1b1b20" stroke-width="1.5" /><path d="M854 1137H861M854 1143H861" stroke="#1b1b20" stroke-width="1.2" />
            <ellipse cx="863" cy="1154" rx="3" ry="5" fill="#1b1b20" />
          </g>
        </svg>

        <svg class="slide w599" viewBox="0 36 1490 1200" preserveAspectRatio="none">
          {@render fluxusFrame('#b2b3b7', 'company')}
          <g transform="scale(1.695 1) translate(-921 0)">
            {@render t(1205, 160, 21, 22, 'Geral', '#3c3c42', 600)}
            {@render t(1205, 905, 21, 40, 'Endereço', '#3c3c42', 600)}
            <path d="M1202 184H1790M1202 928H1790" stroke="#909097" />
            {#each company as [label, y, w]}
              {@render t(1254, y, 21, w, label, '#67666d')}
            {/each}
            <rect x="1085" y="1140" width="715" height="96" fill="#7d86a2" />
          </g>
        </svg>
      </div>
      {@render arrow('left', true)}
      {@render arrow('right', false)}
    </div>
  </section>

  <footer>
    <svg class="small" viewBox="0 0 50 50" aria-label="E-mail">
      <path d="M37.500 47.800H25A22.800 22.800 0 1 1 47.800 25V29.200A6.100 6.100 0 0 1 35.500 29.200V25" />
      <circle cx="25" cy="25" r="10.400" />
    </svg>
    <svg class="small" viewBox="0 0 50 50" aria-label="Telefone">
      <path d="M2.200 2.200H12.300Q13.500 2.200 13.700 3.500L15.600 12.700Q15.800 13.800 15 14.600L7.600 21.500M2.200 2.200C2.200 27.500 22.500 47.800 47.800 47.800V37.700Q47.800 36.500 46.500 36.300L37.800 34.500Q36.600 34.300 35.800 35.100L28.500 42.400" />
    </svg>
    <svg viewBox="0 0 60 60" aria-label="GitHub">
      <circle cx="30" cy="30" r="27.5" />
      <path transform="translate(15 14.700) scale(1.875)" d="M8 0C3.580 0 0 3.580 0 8c0 3.540 2.290 6.530 5.470 7.590.4.070.55-.170.55-.380 0-.190-.010-.820-.010-1.490-2.010.370-2.530-.490-2.690-.940-.090-.230-.480-.940-.820-1.130-.280-.150-.680-.520-.010-.530.630-.010 1.080.580 1.230.820.720 1.210 1.870.870 2.330.660.070-.520.280-.870.510-1.070-1.780-.2-3.640-.890-3.640-3.950 0-.870.310-1.590.820-2.150-.080-.2-.360-1.020.080-2.120 0 0 .670-.210 2.200.820.640-.180 1.320-.270 2-.270s1.360.090 2 .270c1.530-1.040 2.200-.820 2.200-.820.440 1.100.160 1.920.080 2.120.510.560.820 1.270.820 2.150 0 3.070-1.870 3.750-3.650 3.950.290.250.540.730.540 1.480 0 1.070-.010 1.930-.010 2.200 0 .210.150.460.550.380A8.010 8.010 0 0 0 16 8c0-4.420-3.580-8-8-8z" />
    </svg>
    <svg viewBox="0 0 60 60" aria-label="LinkedIn">
      <circle cx="30" cy="30" r="27.5" />
      <text class="in" x="18.700" y="40" textLength="25.500" lengthAdjust="spacingAndGlyphs">in</text>
    </svg>
  </footer>
</div>

<style>
  :global(body) { background: #000; overflow: hidden; }
  .defs { position: absolute; width: 0; height: 0; }
  .page {
    position: relative; box-sizing: border-box; width: 3568px; height: 1930px; overflow: hidden;
    padding: 72px 178px 0 177px; font-family: Inter, sans-serif;
    background: linear-gradient(90deg, #151337 0, #11102c 220px, #0a0a1b 600px, #05050d 900px, #000 1300px);
  }
  h1 {
    margin: 0 0 189px 1px; font-size: 70px; line-height: 80px; font-weight: 800; color: #f0f0f0;
    white-space: nowrap; transform: scaleX(1.070); transform-origin: 0 50%;
  }
  .card {
    box-sizing: border-box; border: 2px solid #6964c8; border-radius: 30px 80px 30px 80px;
    background: #212136; overflow: hidden; margin-bottom: 193px;
  }
  .fluxus { padding-bottom: 95px; }
  h2 {
    margin: 15px 0 67px 29px; font-size: 39px; line-height: 49px; font-weight: 400; color: #f0f0f0;
    white-space: nowrap; transform: scaleX(1.082); transform-origin: 0 50%;
  }
  .fluxus h2 { transform: scaleX(1.092); }
  p { margin: 0 0 61.5px 29px; font-size: 31px; line-height: 40.5px; color: #7a7a78; }
  p span { display: block; white-space: nowrap; width: max-content; transform-origin: 0 50%; }
  .d1 { transform: scaleX(1.092); }
  .d2 { transform: scaleX(1.085); }
  .d3 { transform: scaleX(1.087); }
  .gallery { position: relative; height: 400px; }
  .strip { display: flex; gap: 12px; overflow: hidden; height: 400px; }
  .slide { flex: none; height: 400px; font-family: "Noto Sans", sans-serif; display: block; }
  .slide :global(path), .slide :global(rect), .slide :global(ellipse) { vector-effect: non-scaling-stroke; }
  .w649 { width: 648.7px; }
  .w625 { width: 625px; }
  .w650 { width: 649px; }
  .w493 { width: 492.7px; }
  .w599 { width: 598.9px; }
  .arrow {
    position: absolute; top: 158px; width: 48px; height: 88px; fill: none; stroke: #357bff;
    stroke-width: 7; stroke-linecap: round; stroke-linejoin: round;
  }
  .left { left: 23px; }
  .right { right: 24px; }
  .faded { opacity: .35; }
  .foot { display: flex; justify-content: space-between; align-items: flex-start; padding: 31px 14px 20px 40px; }
  .tags { display: flex; gap: 24px; margin: 0; padding: 0; list-style: none; }
  .tags li {
    box-sizing: border-box; height: 44px; border: 2px solid #7d7c76; border-radius: 9px 24px 9px 24px; color: #7a7a76;
    font-size: 23.5px; line-height: 40px; text-align: center; white-space: nowrap;
  }
  .tags span { display: inline-block; }
  .t1 { width: 77px; }
  .t2 { width: 120px; }
  .t2 span { transform: scaleX(1.03); }
  .t3 { width: 239px; }
  .t3 span { transform: scaleX(1.09); }
  .t4 { width: 196px; }
  .t4 span { transform: scaleX(1.07); }
  .code { width: 37px; height: 37px; margin-top: -10px; fill: none; stroke: #7d7d79; stroke-width: 4.4; }
  footer {
    position: absolute; left: 0; right: 0; bottom: 0; box-sizing: border-box; height: 73px; padding-left: 1500px;
    display: flex; align-items: flex-start; background: rgba(28, 25, 66, .72); border-bottom: 2px solid rgba(130, 130, 170, .35);
  }
  footer svg { flex: none; width: 60px; height: 60px; margin: -28px 133px 0 0; fill: #fff; }
  footer .small { width: 50px; height: 50px; margin-right: 143px; fill: none; stroke: #fff; stroke-width: 4.4; stroke-linejoin: round; }
  footer .small + svg:not(.small) { margin-left: -5px; }
  footer circle { fill: none; stroke: #fff; stroke-width: 5; }
  footer .small circle { stroke-width: 4.4; }
  .in { font: 800 30px "Open Sans", sans-serif; }
</style>
